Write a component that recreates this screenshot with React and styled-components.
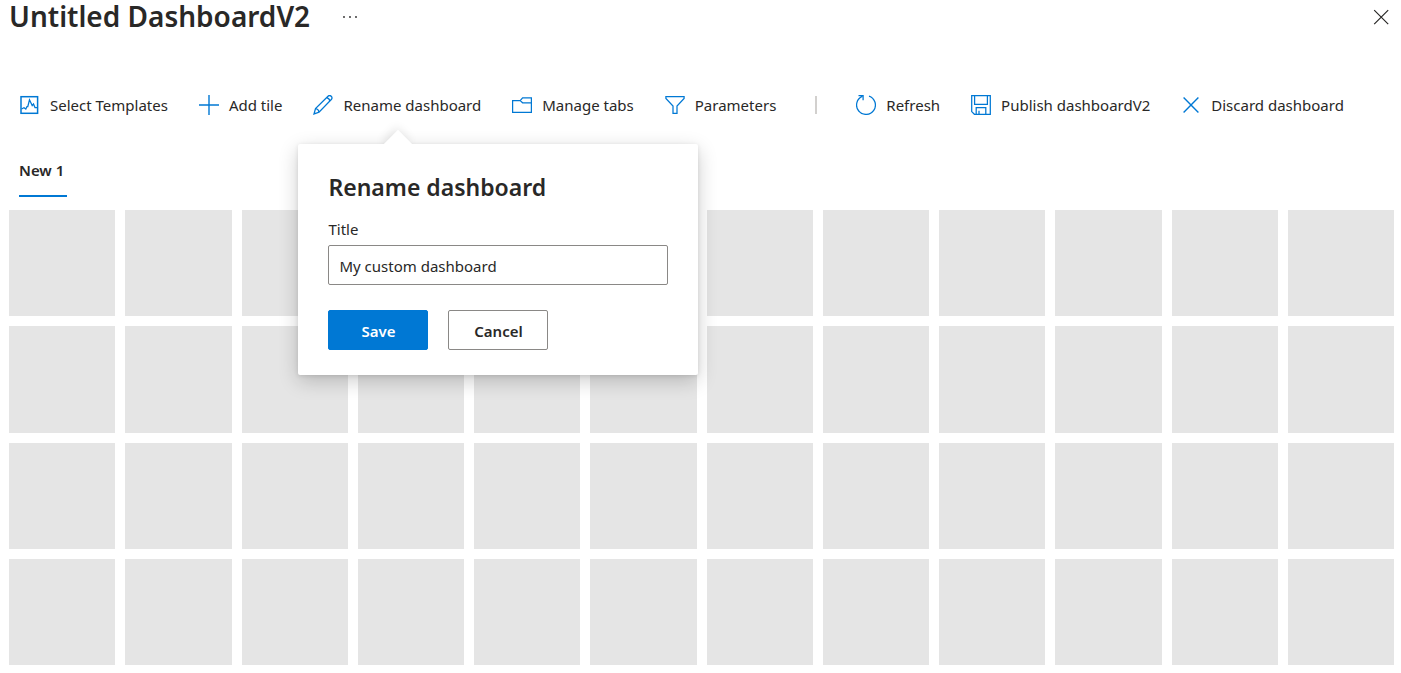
import React, { useState } from "react";
import styled, { createGlobalStyle } from "styled-components";

const GlobalStyle = createGlobalStyle`
  *, *::before, *::after { box-sizing: border-box; }
  body {
    margin: 0;
    background: #fff;
    color: #292827;
    font-family: "Segoe UI", "Noto Sans", "Open Sans", sans-serif;
    font-size: 15px;
    line-height: 20px;
  }
  button, input { font: inherit; color: inherit; }
`;

const Header = styled.header`
  display: flex;
  align-items: flex-start;
  justify-content: space-between;
  height: 85px;
  padding: 0 8px 0 9px;
`;

const TitleGroup = styled.div`
  display: flex;
  align-items: flex-start;
  gap: 28px;
`;

const PageTitle = styled.h1`
  margin: 0;
  font-size: 28px;
  line-height: 32px;
  font-weight: 600;
  white-space: nowrap;
`;

const IconButton = styled.button`
  display: flex;
  align-items: center;
  justify-content: center;
  width: 24px;
  height: 34px;
  padding: 0;
  border: 0;
  background: none;
  cursor: pointer;
`;

const Toolbar = styled.div`
  display: flex;
  align-items: center;
  gap: 1px;
  height: 40px;
  padding-left: 5px;
`;

const ToolItem = styled.div`
  position: relative;
  flex: none;
`;

const ToolButton = styled.button`
  display: flex;
  align-items: center;
  gap: 10px;
  height: 40px;
  padding: 0 15px;
  border: 0;
  background: none;
  white-space: nowrap;
  cursor: pointer;
`;

const ToolIcon = styled.svg`
  flex: none;
  width: 20px;
  height: 20px;
  fill: none;
  stroke: #0078d4;
  stroke-width: 1.25;
`;

const Separator = styled.div`
  flex: none;
  width: 2px;
  height: 18px;
  margin: 0 23px;
  background: #d2d0ce;
`;

const TabList = styled.div`
  display: flex;
  padding: 26px 19px 0;
`;

const Tab = styled.button`
  height: 46px;
  padding: 0 3px 6px 0;
  border: 0;
  border-bottom: 2px solid #0078d4;
  background: none;
  font-weight: 600;
  cursor: pointer;
`;

const Grid = styled.main`
  display: grid;
  grid-template-columns: repeat(12, 1fr);
  gap: 10px;
  padding: 13px 7px 8px 9px;
`;

const Tile = styled.div`
  aspect-ratio: 1;
  background: #e5e5e5;
`;

const Callout = styled.form`
  position: absolute;
  z-index: 2;
  top: 59px;
  left: 0;
  width: 400px;
  padding: 28px 30px 25px;
  border-radius: 2px;
  background: #fff;
  box-shadow: 0 6px 20px rgba(0, 0, 0, 0.2), 0 1px 4px rgba(0, 0, 0, 0.1);

  &::before {
    content: "";
    position: absolute;
    top: -10px;
    left: 90px;
    width: 20px;
    height: 20px;
    background: #fff;
    transform: rotate(45deg);
    box-shadow: -3px -1px 10px rgba(0, 0, 0, 0.1);
    clip-path: polygon(-12px -12px, 32px -12px, -12px 32px);
  }
`;

const CalloutTitle = styled.h2`
  margin: 0;
  font-size: 23px;
  line-height: 30px;
  font-weight: 600;
`;

const FieldLabel = styled.label`
  display: block;
  margin-top: 17px;
`;

const TextField = styled.input`
  display: block;
  width: 100%;
  height: 40px;
  margin-top: 6px;
  padding: 2px 10px 0;
  border: 1px solid #8a8886;
  border-radius: 2px;
  background: #fff;
  outline: 0;
`;

const Actions = styled.div`
  display: flex;
  gap: 20px;
  margin-top: 25px;
`;

const ActionButton = styled.button`
  width: 100px;
  height: 40px;
  padding: 2px 0 0;
  border: 1px solid ${(p) => (p.$primary ? "#0078d4" : "#8a8886")};
  border-radius: 2px;
  background: ${(p) => (p.$primary ? "#0078d4" : "#fff")};
  color: ${(p) => (p.$primary ? "#fff" : "#292827")};
  font-weight: 600;
  cursor: pointer;
`;

const icons = {
  templates: (
    <>
      <rect x="1" y="1.700" width="16.600" height="16.600" strokeWidth="1.5" />
      <path d="M1.500 14l2.500-1.200 1.800 1.200L7 11.500h.8L9.500 4.800l2.700 5.700 1.300-1.500 1.500 3.500h2.500" />
    </>
  ),
  add: <path d="M10 0v20M0 10h20" strokeWidth="1.4" />,
  rename: (
    <path d="M1 19l1.5-5.5L15 1.2c1-.9 2.300-.8 3.200.1.900.900 1 2.200.1 3.200L6 17.200 1 19zM2.500 13.500c1.800.2 3.200 1.600 3.500 3.500M13.500 2.700c1.600.3 3 1.700 3.400 3.300M1.300 17.500l1.200 1.200" />
  ),
  folder: (
    <path d="M.6 5.600h7.600l2.400-2.800h8.800v14.600H.6V5.600zM8.200 5.600l2.400 2.200h8.800" />
  ),
  filter: <path d="M.9 1.600h18.200v1.800L12 11v7.400H8V11L.9 3.400z" />,
  refresh: (
    <path d="M6.200 1.400A9.400 9.400 0 1 0 13 1.100M2.500.7h4.600v4.600" />
  ),
  save: (
    <path d="M.7.7h18.600v18.600H3.400L.7 16.600zM3.600.7v8.700h12.800V.7M5.200 19.300v-6.700h9.600v6.700M8 19.300v-3.500" />
  ),
  discard: <path d="M2.600 2.600l14.800 14.800M17.400 2.600L2.600 17.400" strokeWidth="1.400" />,
};

const tools = [
  { icon: "templates", label: "Select Templates" },
  { icon: "add", label: "Add tile" },
  { icon: "rename", label: "Rename dashboard" },
  { icon: "folder", label: "Manage tabs" },
  { icon: "filter", label: "Parameters" },
  { separator: true },
  { icon: "refresh", label: "Refresh" },
  { icon: "save", label: "Publish dashboardV2" },
  { icon: "discard", label: "Discard dashboard" },
];

function RenameCallout() {
  const [title, setTitle] = useState("My custom dashboard");
  return (
    <Callout onSubmit={(e) => e.preventDefault()}>
      <CalloutTitle>Rename dashboard</CalloutTitle>
      <FieldLabel htmlFor="dashboard-title">Title</FieldLabel>
      <TextField
        id="dashboard-title"
        type="text"
        value={title}
        onChange={(e) => setTitle(e.target.value)}
      />
      <Actions>
        <ActionButton type="submit" $primary>Save</ActionButton>
        <ActionButton type="button">Cancel</ActionButton>
      </Actions>
    </Callout>
  );
}

export default function App() {
  return (
    <>
      <GlobalStyle />
      <Header>
        <TitleGroup>
          <PageTitle>Untitled DashboardV2</PageTitle>
          <IconButton type="button" aria-label="More actions">
            <svg width="16" height="4" viewBox="0 0 16 4" fill="#292827">
              <circle cx="2" cy="2" r="0.9" />
              <circle cx="8" cy="2" r="0.9" />
              <circle cx="14" cy="2" r="0.9" />
            </svg>
          </IconButton>
        </TitleGroup>
        <IconButton type="button" aria-label="Close">
          <svg width="16" height="16" viewBox="0 0 16 16" stroke="#292827" strokeWidth="1.200">
            <path d="M1.200 1.200l14 14M15.200 1.200l-14 14" />
          </svg>
        </IconButton>
      </Header>
      <Toolbar role="toolbar">
        {tools.map((tool, i) =>
          tool.separator ? (
            <Separator key={i} />
          ) : (
            <ToolItem key={tool.label}>
              <ToolButton type="button">
                <ToolIcon viewBox="0 0 20 20" aria-hidden="true">{icons[tool.icon]}</ToolIcon>
                {tool.label}
              </ToolButton>
              {tool.icon === "rename" && <RenameCallout />}
            </ToolItem>
          )
        )}
      </Toolbar>
      <TabList role="tablist">
        <Tab type="button" role="tab" aria-selected="true">New 1</Tab>
      </TabList>
      <Grid>
        {Array.from({ length: 48 }, (_, i) => (
          <Tile key={i} />
        ))}
      </Grid>
    </>
  );
}
